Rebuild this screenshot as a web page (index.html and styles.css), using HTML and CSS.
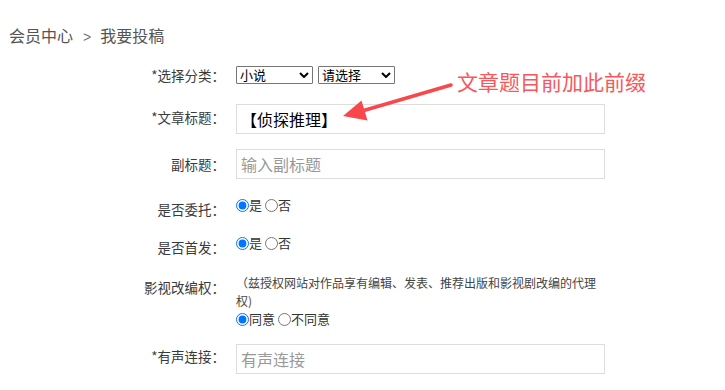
FILE: index.html
```html
<!DOCTYPE html>
<html lang="zh-CN">
<head>
<meta charset="utf-8">
<title>我要投稿</title>
<link rel="stylesheet" href="styles.css">
</head>
<body>
<div class="page">
  <div class="crumb">会员中心<span class="sep">&gt;</span>我要投稿</div>

  <div class="form">
    <div class="row row-select">
      <div class="label">*选择分类：</div>
      <div class="ctrl">
        <span class="selwrap"><select class="sel"><option>小说</option></select><svg class="chev" width="10" height="6" viewBox="0 0 10 6"><path d="M1 1 L5 5 L9 1" fill="none" stroke="#000" stroke-width="2"/></svg></span>
        <span class="selwrap"><select class="sel"><option>请选择</option></select><svg class="chev" width="10" height="6" viewBox="0 0 10 6"><path d="M1 1 L5 5 L9 1" fill="none" stroke="#000" stroke-width="2"/></svg></span>
      </div>
    </div>

    <div class="row row-input">
      <div class="label">*文章标题：</div>
      <div class="ctrl"><input class="text title" type="text" value="【侦探推理】"></div>
    </div>

    <div class="row row-input row-sub">
      <div class="label">副标题：</div>
      <div class="ctrl"><input class="text" type="text" placeholder="输入副标题"></div>
    </div>

    <div class="row row-radio">
      <div class="label">是否委托：</div>
      <div class="ctrl radios"><label class="opt"><input type="radio" name="wt" checked>是</label> <label class="opt"><input type="radio" name="wt">否</label></div>
    </div>

    <div class="row row-radio row-first">
      <div class="label">是否首发：</div>
      <div class="ctrl radios"><label class="opt"><input type="radio" name="sf" checked>是</label> <label class="opt"><input type="radio" name="sf">否</label></div>
    </div>

    <div class="row row-rights">
      <div class="label">影视改编权：</div>
      <div class="ctrl rights">
        <p class="note">（兹授权网站对作品享有编辑、发表、推荐出版和影视剧改编的代理权)</p>
        <div class="radios"><label class="opt"><input type="radio" name="ys" checked>同意</label> <label class="opt"><input type="radio" name="ys">不同意</label></div>
      </div>
    </div>

    <div class="row row-input row-audio">
      <div class="label">*有声连接：</div>
      <div class="ctrl"><input class="text" type="text" placeholder="有声连接"></div>
    </div>
  </div>

  <div class="callout">文章题目前加此前缀</div>
  <svg class="arrow" width="725" height="390" viewBox="0 0 725 390" aria-hidden="true">
    <line x1="451" y1="85" x2="362" y2="111" stroke="#f9474c" stroke-width="3.5" stroke-linecap="round"/>
    <polygon points="343,116 361.5,100.5 367.5,120.5" fill="#f9474c"/>
  </svg>
</div>
</body>
</html>
```

FILE: styles.css
```css
* { box-sizing: border-box; }
html, body {
  margin: 0;
  padding: 0;
  background: #fff;
}
body {
  font-family: "Noto Sans CJK SC", "Microsoft YaHei", sans-serif;
  color: #333;
}
.page {
  position: relative;
  width: 725px;
  height: 390px;
  overflow: hidden;
}
.crumb {
  height: 46px;
  padding: 24px 0 0 9px;
  font-size: 16px;
  line-height: 22px;
  color: #555;
  overflow: hidden;
}
.sep {
  margin: 0 9px 0 10px;
  font-family: "Liberation Sans", sans-serif;
  font-size: 14px;
  line-height: 14px;
  color: #777;
}
.form {
  display: flex;
  flex-direction: column;
}
.row {
  display: flex;
  align-items: center;
}
.label {
  width: 225px;
  flex: none;
  text-align: right;
  font-size: 13.5px;
  line-height: 20px;
  color: #3a3a3a;
}
.ctrl {
  margin-left: 11px;
}
.row-select {
  margin-top: 20px;
  height: 18px;
}
.row-select .ctrl {
  display: flex;
  gap: 5px;
}
.selwrap {
  position: relative;
  display: block;
  width: 77px;
  height: 18px;
}
.sel {
  display: block;
  width: 77px;
  height: 18px;
  margin: 0;
  padding: 0 0 0 3px;
  appearance: none;
  -webkit-appearance: none;
  font-family: "Noto Sans CJK SC", sans-serif;
  font-size: 13px;
  line-height: 16px;
  color: #000;
  border: 1px solid #767676;
  border-radius: 1px;
  background: #fff;
}
.chev {
  position: absolute;
  right: 4px;
  top: 6px;
  pointer-events: none;
}
.row-input {
  margin-top: 20px;
  height: 30px;
}
.row-input .label {
  margin-top: -5px;
}
.row-sub {
  margin-top: 15px;
}
.row-sub .label {
  margin-top: 0;
}
.text {
  display: block;
  width: 369px;
  height: 30px;
  margin: 0;
  padding: 0 4px;
  border: 1px solid #ddd;
  font-family: "Noto Sans CJK SC", sans-serif;
  font-size: 16px;
  color: #000;
  outline: none;
}
.text::placeholder {
  color: #999;
}
.row-radio {
  margin-top: 20px;
  align-items: flex-start;
}
.row-first {
  margin-top: 18px;
}
.radios {
  font-size: 13px;
  line-height: 16px;
  color: #333;
  margin-top: -2px;
}
.opt {
  display: inline-flex;
  align-items: center;
}
.opt input {
  width: 13px;
  height: 13px;
  margin: 0;
}
.row-rights {
  margin-top: 20px;
  align-items: flex-start;
}
.rights {
  width: 369px;
  margin-top: -3px;
}
.note {
  margin: 0;
  font-size: 12px;
  line-height: 18px;
  color: #444;
}
.rights .radios {
  margin-top: 0;
  line-height: 18px;
}
.row-audio {
  margin-top: 14px;
}
.callout {
  position: absolute;
  left: 457px;
  top: 67px;
  font-size: 21px;
  line-height: 28px;
  color: #f9575b;
  white-space: nowrap;
}
.arrow {
  position: absolute;
  left: 0;
  top: 0;
  pointer-events: none;
}
```
